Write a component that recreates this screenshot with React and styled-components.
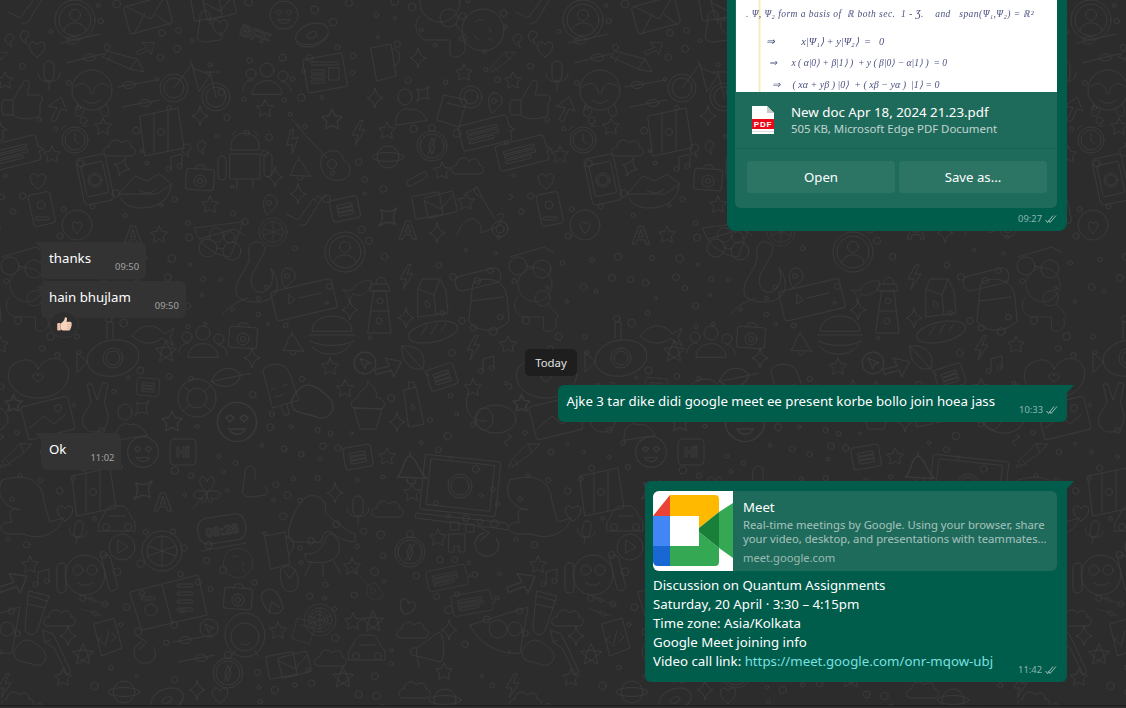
import React from 'react'
import styled, { createGlobalStyle } from 'styled-components'

const FONT = `"Noto Sans", "Open Sans", "Liberation Sans", sans-serif`

const Global = createGlobalStyle`
  html, body { margin: 0; padding: 0; background: #2c2c2c; }
  body { font-family: ${FONT}; color: #fff; }
`

const Page = styled.div`
  position: relative;
  width: 1126px;
  height: 708px;
  overflow: hidden;
  background: #2c2c2c;
  display: flex;
  flex-direction: column;
`

const Wallpaper = styled.svg`
  position: absolute;
  inset: 0;
  width: 100%;
  height: 100%;
`

const Chat = styled.div`
  position: relative;
  flex: 1;
  min-height: 0;
  overflow: hidden;
  display: flex;
  flex-direction: column;
  justify-content: flex-end;
  padding: 0 59px 23px 41px;
`

const Strip = styled.div`
  position: relative;
  height: 2px;
  background: #2c2c2c;
  border-top: 1px solid #1f1f1f;
`

const Row = styled.div`
  display: flex;
  flex-shrink: 0;
  justify-content: ${p => (p.$out ? 'flex-end' : 'flex-start')};
  margin-top: ${p => p.$top || 0}px;
`

const Bubble = styled.div`
  position: relative;
  border-radius: ${p => (p.$tail ? (p.$out ? '6px 0 6px 6px' : '0 6px 6px 6px') : '6px')};
  background: ${p => (p.$out ? '#005c4b' : '#333333')};
  color: #fff;
  font-size: 13.25px;
  line-height: 19px;
  ${p => p.$tail && `
    &::before {
      content: '';
      position: absolute;
      top: 0;
      ${p.$out ? 'right: -7px;' : 'left: -6px;'}
      width: 7px;
      height: 8px;
      background: ${p.$out ? '#005c4b' : '#333333'};
      clip-path: ${p.$out ? 'polygon(0 0, 100% 0, 0 100%)' : 'polygon(0 0, 100% 0, 100% 100%)'};
    }
  `}
`

const TextBubble = styled(Bubble)`
  display: flex;
  gap: 24px;
  padding: 7px ${p => (p.$out ? 9 : 7)}px 11px 8px;
`

const Time = styled.span`
  display: flex;
  align-items: center;
  gap: 3px;
  align-self: flex-end;
  margin-bottom: -6px;
  font-size: 9.4px;
  line-height: 14px;
  color: rgba(255, 255, 255, 0.55);
  white-space: nowrap;
`

const Reaction = styled.div`
  position: absolute;
  left: 8px;
  top: 30px;
  width: 30px;
  height: 27px;
  border-radius: 14px;
  background: #2d2d2d;
  border: 1px solid #383838;
  box-sizing: border-box;
  display: flex;
  align-items: center;
  justify-content: center;
`

const DayPill = styled.div`
  align-self: center;
  flex-shrink: 0;
  margin: 31px 6px 0 0;
  width: 52px;
  height: 27px;
  border-radius: 5px;
  background: #1e1e1e;
  color: #e2e2e2;
  font-size: 11.4px;
  line-height: 27px;
  text-align: center;
`

const DocBubble = styled(Bubble)`
  width: 340px;
  box-sizing: border-box;
  padding: 0 10px 0 8px;
  border-radius: 0 0 8px 8px;
`

const DocCard = styled.div`
  border-radius: 0 0 6px 6px;
  background: #1f6b5b;
  overflow: hidden;
`

const Scan = styled.div`
  height: 150px;
  margin-left: 1px;
  background: linear-gradient(90deg, #fff 22px, #f5eebc 23px, #f3ebc0 24px, #fff 25px);
  display: flex;
  flex-direction: column;
  justify-content: flex-end;
  overflow: hidden;
`

const Bracket = styled.div`
  flex-shrink: 0;
  width: 20px;
  height: 5px;
  margin: 0 0 ${p => p.$gap}px ${p => p.$left}px;
  border: solid #4a5180;
  border-width: 0 1px 1px;
  border-radius: 0 0 7px 7px;
  filter: blur(0.5px);
`

const Scrawl = styled.div`
  height: 14px;
  margin-bottom: ${p => p.$gap || 0}px;
  padding-left: ${p => p.$left}px;
  font-family: "Liberation Serif", serif;
  font-style: italic;
  font-size: ${p => p.$size || 10}px;
  letter-spacing: ${p => p.$track || 0}px;
  line-height: 14px;
  color: #4a5180;
  white-space: pre;
  filter: blur(0.6px);
`

const DocInfo = styled.div`
  display: flex;
  align-items: center;
  gap: 17px;
  height: 56px;
  padding-left: 17px;
  border-bottom: 1px solid #1a6050;
`

const DocName = styled.div`
  font-size: 13.3px;
  line-height: 18px;
`

const DocMeta = styled.div`
  font-size: 11.4px;
  line-height: 16px;
  color: rgba(255, 255, 255, 0.72);
`

const DocActions = styled.div`
  display: flex;
  gap: 4px;
  padding: 12px 10px 15px 12px;
`

const DocButton = styled.div`
  flex: 1;
  height: 32px;
  border-radius: 4px;
  background: #2c7565;
  font-size: 13.2px;
  line-height: 32px;
  text-align: center;
`

const DocFooter = styled.div`
  display: flex;
  justify-content: flex-end;
  height: 23px;
  & > span {
    align-self: flex-start;
    margin: 4px 0 0;
  }
`

const MeetBubble = styled(Bubble)`
  width: 422px;
  box-sizing: border-box;
  padding: 10px 10px 11px 8px;
`

const LinkCard = styled.div`
  display: flex;
  height: 80px;
  margin-bottom: 5px;
  border-radius: 6px;
  overflow: hidden;
  background: #1f6b5b;
`

const LinkThumb = styled.svg`
  width: 80px;
  height: 80px;
  flex-shrink: 0;
`

const LinkBody = styled.div`
  padding: 6px 0 0 10px;
`

const LinkTitle = styled.div`
  font-size: 13.2px;
  line-height: 20px;
  margin-bottom: 1px;
`

const LinkDesc = styled.div`
  font-size: 11.25px;
  line-height: 14px;
  color: rgba(255, 255, 255, 0.6);
  white-space: pre;
`

const LinkHost = styled.div`
  margin-top: 3px;
  font-size: 11.2px;
  line-height: 18px;
  color: rgba(255, 255, 255, 0.55);
`

const LastLine = styled.div`
  display: flex;
  justify-content: space-between;
`

const Link = styled.span`
  color: #7be0e0;
`

const Ticks = () => (
  <svg width="12" height="8" viewBox="0 0 12 8" fill="none" stroke="rgba(255,255,255,.6)" strokeWidth="1">
    <path d="M0.5 5L2.5 7.5L8 0.5M5 7.5L11 0.5M3.6 5.5L5 7.5" />
  </svg>
)

const Thumb = () => (
  <svg width="17" height="17" viewBox="0 0 17 17">
    <path d="M5 7.5L8 4.5C8.6 3.5 8.6 2 9.2 1.3C10.2 0.8 11.2 1.8 11 3.2L10.6 6H14.6C16 6.2 16 8 15.3 8.5C16 9.2 15.8 10.4 15 10.7C15.4 11.6 15 12.6 14.2 12.8C14.4 13.8 13.7 14.6 12.6 14.6H8C6.5 14.6 5.6 14 5 13.6Z" fill="#f6d4bd" />
    <path d="M10.6 6H14.6M11 8.6H15.2M11 10.8H15M10.8 12.9H14.2" stroke="#dca98a" strokeWidth=".7" fill="none" />
    <rect x="1.2" y="7" width="3.6" height="7.4" rx="1" fill="#efc2a6" />
  </svg>
)

const PdfIcon = () => (
  <svg width="22" height="28" viewBox="0 0 22 28" style={{ flexShrink: 0 }}>
    <path d="M0 0H15L22 7V28H0Z" fill="#fff" />
    <path d="M15 0L22 7H15Z" fill="#c9c9c9" />
    <rect y="13" width="22" height="10" fill="#e8091a" />
    <text x="11" y="21" textAnchor="middle" fontSize="8" fontWeight="700" letterSpacing=".8" fill="#fff" fontFamily="Liberation Sans, sans-serif">PDF</text>
    <path d="M0 25.5H22" stroke="#ddd" />
  </svg>
)

const MeetLogo = () => (
  <LinkThumb viewBox="0 0 80 80">
    <rect width="80" height="80" fill="#fff" />
    <path d="M0 25L17 4V25Z" fill="#ea4335" />
    <path d="M17 4H62Q66 4 66 8V21L46 37V25H17Z" fill="#ffba00" />
    <path d="M0 25H17V55H0Z" fill="#4285f4" />
    <path d="M0 55H17V75H5Q0 75 0 70Z" fill="#1967d2" />
    <path d="M17 55H46V41L66 57V71Q66 75 62 75H17Z" fill="#34a853" />
    <path d="M46 37L66 21V57L46 41Z" fill="#188038" />
    <path d="M66 21L80 12V67L66 57Z" fill="#34a853" />
  </LinkThumb>
)

// wallpaper doodles, each drawn round 0,0
const starPath = (r = 9) => {
  let d = ''
  for (let i = 0; i < 10; i++) {
    const a = -Math.PI / 2 + (i * Math.PI) / 5
    const q = i % 2 ? r * 0.5 : r
    d += `${i ? 'L' : 'M'}${(Math.cos(a) * q).toFixed(1)} ${(Math.sin(a) * q).toFixed(1)}`
  }
  return d + 'Z'
}

const Lines = ({ x, y, w, n = 2, gap = 5 }) =>
  Array.from({ length: n }, (_, i) => <rect key={i} x={x} y={y + i * gap} width={w} height={3} rx={1.5} />)

const Label = ({ children, size = 14, y = 5 }) => (
  <text textAnchor="middle" y={y} fontSize={size} fontWeight="700" fontFamily="Liberation Sans, sans-serif">{children}</text>
)

const shapes = {
  star: <path d={starPath()} />,
  sparkle: <path d="M0-10Q1-2 8 0Q1 2 0 10Q-1 2-8 0Q-1-2 0-10Z" />,
  heart: <path d="M0 8C-10 2-9-7-4-7C-2-7 0-5 0-4C0-5 2-7 4-7C9-7 10 2 0 8Z" />,
  cloud: <path d="M-14 8C-20 8-20-1-13-1C-13-9-4-10-1-5C3-9 10-7 9-1C15-1 15 8 9 8Z" />,
  bolt: <path d="M2-12L-6 2H0L-3 12L7-3H1L5-12Z" />,
  quote: <><path d="M-10 4C-14 2-14-6-8-6C-3-6-3 1-8 2L-6 7Z" /><path d="M5 1C1-1 1-9 7-9C12-9 12-2 7-1L9 4Z" /></>,
  music: <><path d="M-5 6V-6L6-9V3" /><circle cx="-7.500" cy="6" r="2.500" /><circle cx="3.500" cy="3" r="2.500" /></>,
  bubble: <><path d="M-25-10Q-25-13-22-13H22Q25-13 25-10V-1L30 4L25 4V10Q25 13 22 13H-22Q-25 13-25 10Z" /><Lines x={-18} y={-6} w={32} /><Lines x={-18} y={4} w={26} n={1} /></>,
  note: <><rect x="-14" y="-11" width="28" height="22" rx="3" /><Lines x={-8} y={-5} w={16} n={3} gap={4} /></>,
  mic: <><rect x="-5" y="-14" width="10" height="20" rx="5" /><path d="M-11-2C-11 10 11 10 11-2M0 7V15" /></>,
  avatar: <><circle r="20" /><circle r="16" /><circle cy="-5" r="5.500" /><path d="M-11 11C-10 0 10 0 11 11" /></>,
  thumb: <path d="M-18 0H-9L1-17C3-22 8-20 7-14L5-5H17C21-5 21 2 18 3V15C10 20-3 20-9 15H-18C-21 15-21 0-18 0ZM-9 0V15" />,
  arrow: <path d="M-9-2L3-11L9 3L3 1L-3 14L-7 12L-1 0Z" />,
  facehide: <><circle r="20" /><path d="M-18-3C-8-10-3-6-1 4M18-3C8-10 3-6 1 4M-8 10Q0 17 8 10M-14 13C-22 30-8 30-8 18M14 13C22 30 8 30 8 18" /></>,
  pencil: <path d="M-20-6L-16-12L14-4L21 9L7 6L-20-6ZM-16-1L-12-8M14-4L7 6" />,
  bike: <><circle cx="-21" cy="8" r="14" /><circle cx="-21" cy="8" r="10" /><circle cx="21" cy="17" r="14" /><circle cx="21" cy="17" r="10" /><path d="M-21 8L-3-16M-5-20L-2-12L15-5L4 12L-3-16M21 17L15-8H10M15-8H24" /></>,
  sliders: <><path d="M-20-8L20-15M-15 12L22 5" /><ellipse cx="-8" cy="-10" rx="6" ry="3.500" /><ellipse cx="8" cy="8" rx="6" ry="3.500" /></>,
  map: <><path d="M-20-14L18-22L24 18L-15 26ZM-6-17V22M8-19V20" /><circle cx="1" cy="2" r="3.500" /></>,
  timer: <><circle r="13" /><circle r="10" /><path d="M0-6V1L4 4M-14-10L-10-14M8-14H13" /></>,
  phonewa: <><rect x="-15" y="-24" width="30" height="47" rx="4" transform="rotate(-12)" /><rect x="-11" y="-17" width="22" height="32" rx="2" transform="rotate(-12)" /><circle r="7" /><circle r="5" /></>,
  lips: <path d="M-28 4L-12-14L0-9L12-16L25-6L10 4H-12ZM-26 8C-20 24 22 22 24-4M-8 0C-3 4 4 4 9-1" />,
  camera: <><rect x="-14" y="-10" width="28" height="21" rx="3" transform="rotate(4)" /><circle cy="2" r="6" /><circle cy="2" r="2.500" /><path d="M-5-10L-3-14H4L6-10" /></>,
  android: <><path d="M-14-20A14 12 0 0 1 14-20V-15H-14ZM-9-34L-13-30M9-34L13-30M-15-11H15V14H-15ZM-8 14V24M8 14V24" /><rect x="-27" y="-9" width="8" height="24" rx="4" /><rect x="19" y="-12" width="8" height="24" rx="4" /></>,
  guitar: <><path d="M-31-25L0 8M-35-30L-26-22M-5 6C6-4 16 2 16 10C26 14 26 30 12 30C0 32-10 20-5 6Z" /><circle cx="5" cy="14" r="4.500" /></>,
  bell: <path d="M-9 5C-4 0-5-9 0-10C5-9 6 2 12 6ZM0-10V-13M-2 7C-2 11 4 11 4 7" />,
  people: <><circle cx="0" cy="-12" r="7" /><circle cx="-16" cy="-8" r="5" /><circle cx="16" cy="-6" r="5" /><path d="M-15 12C-14-6 14-6 15 12ZM-24 8C-24 0-18-2-14-2M24 10C24 2 18 0 15 0" /></>,
  news: <><rect x="-20" y="-17" width="40" height="34" rx="2" transform="rotate(-10)" /><Lines x={-14} y={-11} w={28} n={1} /><Lines x={-14} y={-3} w={14} n={3} gap={5} /><rect x="4" y="-5" width="10" height="12" /></>,
  donut: <><ellipse rx="17" ry="11" transform="rotate(-22)" /><ellipse rx="5" ry="3" transform="rotate(-22)" /><path d="M-15 6C-6 14 10 8 15 1" /></>,
  hearteyes: <><circle r="14" /><path d="M-8-3L-5-5L-2-3L-5 0ZM2-3L5-5L8-3L5 0ZM-6 5C-2 10 3 10 6 5Z" /></>,
  envelope: <><rect x="-22" y="-14" width="44" height="28" rx="3" transform="rotate(-15)" /><path d="M-21-8L3 4L18-21M-14 19L-3-2M22 10L8 0" /></>,
  mail2: <><rect x="-20" y="-10" width="28" height="23" rx="2" transform="rotate(-10)" /><rect x="-8" y="-7" width="30" height="21" rx="2" transform="rotate(-14)" /><path d="M-8-2L8 6L20-8" /></>,
  compass: <><circle r="15" /><circle r="12" /><circle cy="-18" r="3.500" /><path d="M4-8L-4 8M-3 0L0-8L3 0L0 8Z" /></>,
  planet: <><circle r="11" /><ellipse rx="16" ry="4.500" /></>,
  drink: <><path d="M-13-12L10-7L2 20L-20 13ZM-10-4L7 0" /><circle cx="14" cy="-10" r="11" /><circle cx="14" cy="-10" r="7" /></>,
  person: <><ellipse cx="-5" cy="-10" rx="7" ry="8" /><path d="M-14 18C-15 2-4 0 0 3C5 0 14 6 17 13Z" /></>,
  scooter: <><path d="M-20-20L-10-26L-4-14L8 6M-6-16C-14-18-14-26-10-26M-30 22C-22-2-4 4-6 20L10 14C18 2 20-2 10 2" /><circle cx="13" cy="16" r="8" /><circle cx="13" cy="16" r="4" /></>,
  astro: <><circle cy="-18" r="20" /><path d="M-20-4C-30 6-20 20-14 20H10V34C14 42 30 34 24 22C34 18 16 10 16 4" /><circle cx="9" cy="-2" r="9" /></>,
  cookie: <><circle r="21" /><path d="M-8-8Q-4-12 0-10M6-2L8 2M-10 4L-4 10M6 8L9 12" /></>,
  mug: <path d="M-12-14L8-18L13 14L-6 19ZM9-13C20-14 18 2 11 4" />,
  laptop: <><rect x="-38" y="-30" width="76" height="55" rx="3" transform="rotate(6)" /><rect x="-32" y="-26" width="64" height="46" transform="rotate(6)" /><path d="M-44 25L46 35L50 42L-44 30Z" /><circle cx="0" cy="-2" r="12" /><circle cx="0" cy="-2" r="9" /></>,
  controller: <path d="M-18 22C-30 22-24 0-12-18C-4-30 16-24 12-8C30 10 42 14 42 14V22C20 22 14-2 8 22Z" />,
  dino: <path d="M-28-30C-8-36 12-34 14-8L20 12L33 8C28 26 6 30-6 24H-22C-34 20-30 12-18 12C-22 4-20-4-10 0C-24-2-36-14-28-30Z" />,
  car: <><path d="M-18 4C-12-2-12-12-4-12H5C11-12 12-2 18 4V13H-18ZM-7-2H8" /><circle cx="-11" cy="9" r="3.500" /><circle cx="11" cy="9" r="3.500" /></>,
  clover: <path d="M0 2C-14-8-4-20 0-8C4-20 14-8 0 2ZM0 2C-18-4-16 12-4 8C-8 14 0 16 0 2ZM0 2C18-4 16 12 4 8C8 14 0 16 0 2ZM0 2L-14 18" />,
  clock: <><rect x="-24" y="-14" width="48" height="26" rx="10" transform="rotate(-9)" /><path d="M-20 21L24 13" /><g transform="rotate(-9)"><Label size={13}>09:28</Label></g></>,
  orange: <><circle r="20" /><circle r="15" /><path d="M0-15V15M-14-5L14 5M-14 5L14-5" /></>,
  play: <><circle r="13" /><path d="M-4-7L6 0L-4 6Z" /></>,
  monkey: <><circle r="20" /><circle cx="-7" cy="-5" r="5" /><circle cx="7" cy="-5" r="5" /><path d="M-7 8Q0 13 7 8" /><rect x="-28" y="-12" width="9" height="30" rx="4" /><rect x="20" y="-14" width="9" height="36" rx="4" transform="rotate(-14)" /></>,
  book: <><path d="M-35-8L33-25L42 15L-23 30ZM-3-15L7 23" /><Lines x={-24} y={-3} w={14} n={1} /><Lines x={12} y={-16} w={16} n={4} gap={8} /><circle cx="-14" cy="10" r="6" /></>,
  flop: <path d="M-9-14C0-22 10-12 8 2C6 12-6 10-8 2C-10-4-10-8-9-14ZM-6-12L0-4L6-14" />,
  tube: <path d="M-6-22L14-17L2 18C-2 24-10 22-10 15ZM-5-17L12-12M-7-9L10-5" />,
  code: <path d="M-12-14L8-20L16 10L-4 18ZM-4-2L-8 2L-3 5M6-5L10-1L6 3M3-7L-1 8" />,
  refresh: <><path d="M-3-11C-16-7-12 12 2 10C12 8 12-2 8-6" /><path d="M-8-17L2-11L-6-4" /></>,
  cursor: <><circle r="9" /><path d="M-4-4L5 0L1 1L0 5Z" /></>,
  woman: <><ellipse rx="20" ry="22" /><circle cy="2" r="14" /><path d="M-4 8Q0 12 5 8M-14 22L-10 16M14 22L10 16" /></>,
  brush: <path d="M-14-20L-4-16L2-4L14 22L10 24L-3-2L-12-8ZM-12-8L-7-10" />,
  blob: <path d="M-12-10C-4-18 6-8 12-2C18 8 8 14 2 12C-6 8-18 10-18 0C-18-4-14-8-12-10Z" />,
  gear: <><circle r="5" /><path d={starPath(11)} /></>,
  pizza: <><path d="M-30-10L28-28L20 18C4 20-20 12-30-10Z" /><circle cx="-2" cy="-6" r="9" /><circle cx="15" cy="-6" r="7" /></>,
  mega: <path d="M-6-2L16-18C22-14 22 8 18 12L-6 6ZM-6-2C-14-4-16 6-6 6M-6 6L-4 16" />,
  burger: <path d="M-20-4C-20-24 20-24 20-4ZM-22 0H22M-22 6C-10 12 10 12 22 6M-20 12C-10 22 10 22 18 10" />,
  bread: <><ellipse rx="25" ry="10" transform="rotate(-12)" /><path d="M-12 3L-6-6M-2 2L4-8M8-1L13-8" /></>,
  lighthouse: <><path d="M-6-14H6L11 28H-12ZM-10-14H10L8-21H-8ZM-4-21C-4-30 6-30 6-21M-9 6H9" /><circle cx="0" cy="-4" r="3" /><circle cx="-1" cy="16" r="3" /></>,
  milk: <><path d="M-12-8L-8-18H10L16-6L18 16L-12 20ZM10-18L4-2L6 18M-12-8L4-2" /><path d="M-4 4C-7 10-1 13 0 8C0 6-2 6-4 4Z" /></>,
  pack: <><path d="M-12-20C0-28 20-24 22-6L24 18C14 30-10 30-16 18ZM-14-2L18-6" /><rect x="-24" y="-32" width="46" height="15" rx="6" transform="rotate(-14)" /></>,
  cream: <path d="M-14 4L-8 24H8L14 4ZM-16 2C-20-6-10-6-10-8C-10-16 0-14 0-24C6-16 10-14 8-8C18-6 18 2 14 4Z" />,
  bottle: <><path d="M-8-10L4-13L12 24L-3 27ZM-3-11L-4-18L2-18L3-12" /><path d="M0 4C-3 10 3 12 3 8Z" /></>,
  dog: <><path d="M-22-20C-28 0-16 10-4 8" /><ellipse cx="6" cy="6" rx="20" ry="14" /><ellipse cx="-6" cy="6" rx="9" ry="11" /></>,
  pop: <><path d="M-14-18C-10-26 8-26 12-16L22 12L-4 20ZM4 18L8 28L12 26L10 16" /><path d="M-6 2L-2 0M6-2L10-4M-2 8Q2 10 6 6" /></>,
  octopus: <path d="M-20 28C-26 12-6 2-8-14C-10-28 4-30 8-20C6-6-14 10-2 22C8 30 20 16 14 0C22 10 24 26 10 32C0 36-14 34-20 28ZM-10 30C-20 34-28 38-34 46" />,
  shades: <><circle cx="-12" cy="3" r="9" /><circle cx="12" cy="6" r="9" /><path d="M-3 3L3 4M-20-6L14-16L24-10" /></>,
  voice: <><rect x="-30" y="-15" width="62" height="30" rx="3" transform="rotate(-13)" /><path d="M-4-2L18-7M-14-6L-8 0L-14 4Z" /></>,
  leaf: <path d="M-11-12C6-14 14-2 10 10C0 14-12 6-11-12ZM-11-12L16 18" />,
  sub: <><ellipse cx="0" cy="0" rx="26" ry="18" transform="rotate(-10)" /><circle r="10" /><circle r="7" /><path d="M-6-20V-36H0V-20M-26 4L-36-6V14Z" /></>,
  fish: <path d="M-18 4C-8-10 8-8 14 2L24-4L20 6L24 14L12 6C4 14-10 12-18 4Z" />,
  hands: <path d="M0 26C-24 26-34 8-28-4C-18-16-2-14 0-2C6-16 24-18 30-4C34 10 22 26 0 26ZM-5 4C-3 0 0 2 0 4C0 2 3 0 5 4C5 7 0 10 0 10C0 10-5 7-5 4Z" />,
  peace: <path d="M-12 8L-4-6L-8-24L-3-24L2-8L8-26L13-24L9-4C16 6 14 24 0 24C-10 24-14 16-12 8Z" />,
  photo: <><rect x="-24" y="-17" width="48" height="34" rx="3" transform="rotate(-14)" /><path d="M-18 10L-4-2L6 6L18-4" /><circle cx="10" cy="-10" r="3.500" /></>,
  buoy: <><circle r="19" /><circle r="10" /><path d="M-14-12L-7-7M14-12L7-7M-14 13L-7 7M14 13L7 7" /></>,
  pin: <><path d="M-1-10C6-10 9-3 6 2L-3 10C-8 3-8-10-1-10Z" /><circle cx="-1" cy="-2" r="2.500" /></>,
  chair: <path d="M-18-4C-8-4-2-6 4-22C10-28 18-18 16-6C12 4 0 6-12 4C-18 4-18-2-18-4ZM-12 4L-18 18M0 6L0 18M10 2L18 16" />,
  pixel: <><rect x="-6" y="-16" width="8" height="8" /><rect x="9" y="-14" width="8" height="8" /><path d="M-8-4H8V14H2V8H-3V14H-8Z" /></>,
  check: <path d="M-22 2L-10 8L6-14L8-10M-8 14L-2 12L14-14L8-16M14-14L18-16" />,
  clip: <rect x="-11" y="-3" width="22" height="6" rx="3" transform="rotate(-30)" />,
  hand: <path d="M-8-10L-10 6C-12 10-10 14-2 14L12 12C16 10 14 4 12 4M-8-10C-10-18 2-20 2-12L2-4" />,
  badge: <><rect x="-11" y="-17" width="22" height="32" rx="3" transform="rotate(-12)" /><circle cx="-1" cy="-5" r="4" /><rect x="-7" y="7" width="14" height="3" rx="1.500" /></>,
  personheart: <><circle r="15" /><path d="M0 8C-6 4-6-3-2-3C-1-3 0-2 0-1C0-2 1-3 2-3C6-3 6 4 0 8Z" /></>,
  bff: <g transform="rotate(20)"><Label size={16}>BFF</Label></g>,
  letterA: <Label size={26} y={9}>A</Label>,
  hi: <><rect x="-13" y="-13" width="26" height="26" rx="4" /><Label size={14}>Hi</Label></>,
}

const placed = [
  ['avatar', 75, 20], ['check', 30, 10], ['envelope', 148, 15], ['quote', 18, 40], ['heart', 37, 49], ['sliders', 81, 50, -3], ['mic', 49, 75],
  ['thumb', 22, 100], ['arrow', 58, 108], ['facehide', 92, 90], ['pencil', 123, 63], ['bike', 195, 80], ['sliders', 137, 95], ['map', 160, 130],
  ['timer', 75, 140], ['star', 103, 127], ['star', 52, 155], ['cloud', 122, 148], ['bubble', 14, 153, -14], ['phonewa', 95, 180], ['lips', 147, 190],
  ['camera', 200, 179], ['android', 245, 165], ['guitar', 327, 150], ['bell', 299, 170], ['people', 267, 82], ['news', 325, 73], ['donut', 312, 35],
  ['hearteyes', 284, 15], ['bff', 255, 35], ['mail2', 212, 5], ['heart', 220, 27], ['hand', 208, 28], ['quote', 195, 150], ['music', 176, 163], ['sparkle', 122, 167, 20],
  ['heart', 38, 181], ['badge', 42, 210], ['personheart', 77, 225], ['arrow', 147, 48, 40, .8], ['sparkle', 200, 116], ['star', 265, 109],
  ['star', 332, 120, 0, 1.2], ['bolt', 292, 142, -15], ['bolt', 358, 133], ['sparkle', 275, 177], ['sparkle', 298, 194], ['star', 210, 205], ['pin', 270, 205], ['check', 308, 212],
  ['note', 345, 209, -12], ['pizza', 217, 240, 10, .8], ['orange', 273, 232, 0, .7], ['letterA', 133, 235], ['star', 159, 235],
  ['astro', 440, 20], ['cookie', 483, 30], ['mug', 383, 62], ['sparkle', 418, 58], ['star', 464, 73], ['pencil', 503, 62, -60, .7], ['star', 5, 81], ['sparkle', 375, 98],
  ['person', 410, 107], ['sparkle', 423, 94, 40], ['drink', 457, 107], ['pin', 495, 103], ['star', 387, 131], ['compass', 432, 146], ['bubble', 485, 133, -14],
  ['planet', 388, 157], ['cloud', 470, 166], ['star', 442, 171], ['clip', 417, 179], ['mail2', 433, 203], ['scooter', 487, 213], ['star', 466, 202], ['sparkle', 388, 217, 45, 1.3], ['letterA', 408, 230], ['sparkle', 437, 233],
  ['shades', 220, 245], ['octopus', 257, 268], ['avatar', 345, 252], ['pin', 288, 278], ['voice', 303, 300], ['sparkle', 350, 310], ['lighthouse', 380, 305], ['fish', 362, 290, 150, .7],
  ['milk', 430, 297], ['bolt', 406, 277], ['pack', 485, 303], ['shades', 22, 263], ['burger', 332, 335], ['bread', 433, 332], ['sparkle', 406, 318], ['camera', 243, 337], ['bell', 292, 345],
  ['people', 203, 345], ['sparkle', 252, 358], ['star', 330, 367], ['cursor', 365, 363, 0, 1.2], ['arrow', 390, 367, 50, 1.1], ['leaf', 413, 358], ['note', 442, 377, -18], ['bolt', 473, 348], ['star', 0, 345],
  ['music', 488, 365], ['star', 473, 388], ['pop', 277, 388], ['blob', 315, 402, 0, 1.3], ['star', 345, 389], ['cream', 368, 405], ['bottle', 412, 400], ['dog', 490, 413], ['leaf', 227, 378, -60], ['buoy', 197, 398],
  ['sparkle', 397, 422], ['hearteyes', 237, 422, 0, 1.4], ['star', 522, 404],
  ['astro', 27, 300, 0, .85], ['fish', 150, 332], ['sub', 113, 358], ['gear', 166, 352], ['hands', 38, 372], ['note', 148, 387, 5, .8], ['photo', 48, 418], ['peace', 95, 408], ['person', 130, 422],
  ['sparkle', 142, 408, 45], ['star', 172, 422, 0, 1.2], ['pencil', 17, 455, -60, .8], ['hearteyes', 143, 452, 0, 1.1], ['hi', 183, 452], ['star', 13, 404],
  ['note', 358, 457, -10], ['star', 387, 457], ['bell', 410, 470, 0, 1.4], ['laptop', 460, 488], ['controller', 313, 520], ['mic', 358, 510], ['sparkle', 335, 493], ['cloud', 390, 509],
  ['star', 412, 493], ['compass', 410, 552], ['star', 438, 538], ['pixel', 457, 538], ['refresh', 487, 545, 0, 1.1], ['chair', 323, 558], ['star', 352, 567], ['guitar', 370, 583, 0, .55], ['bubble', 447, 578, -12, .8], ['bubble', 472, 603, -10, .8],
  ['arrow', 15, 583, 45, 1.2], ['orange', 320, 620, 0, .8], ['star', 353, 622], ['gear', 373, 622], ['heart', 407, 607, 20], ['pizza', 500, 635],
  ['dino', 30, 510], ['map', 92, 490], ['car', 117, 518], ['letterA', 163, 502], ['clover', 207, 490], ['sparkle', 143, 490, 45, 1.3], ['hand', 253, 483], ['clock', 222, 530], ['mug', 277, 550], ['orange', 162, 551], ['play', 122, 547],
  ['monkey', 85, 575], ['cookie', 238, 563, 0, .7], ['heart', 65, 513], ['mic', 78, 532, 10, .8], ['book', 165, 600], ['camera', 238, 598], ['flop', 290, 583], ['flop', 270, 598, 160], ['tube', 35, 613], ['cloud', 62, 618], ['sliders', 93, 607, 30, .6],
  ['code', 106, 638], ['refresh', 145, 653], ['cursor', 209, 628], ['woman', 245, 635], ['mail2', 287, 663], ['star', 278, 631], ['drink', 308, 628, 0, .8], ['brush', 57, 650], ['blob', 32, 653], ['gear', 83, 655], ['sparkle', 68, 636], ['sliders', 193, 650],
  ['compass', 228, 673], ['sparkle', 197, 690], ['star', 63, 678], ['planet', 124, 692], ['donut', 167, 700], ['heart', 220, 695], ['cloud', 20, 700], ['star', 30, 565], ['music', 43, 578],
  ['mega', 423, 650], ['car', 367, 647], ['cloud', 415, 630], ['cloud', 333, 658], ['gear', 343, 678], ['star', 444, 672], ['cloud', 417, 690], ['planet', 445, 700], ['sparkle', 449, 630], ['bolt', 4, 686],
]

// the little circles scattered between the doodles
const dots = []
let seed = 7
const rnd = () => (seed = (seed * 16807) % 2147483647) / 2147483647
for (let i = 0; i < 1500 && dots.length < 300; i++) {
  const x = rnd() * 508
  const y = rnd() * 708
  const r = 1.5 + rnd() * 2.4
  const clear = placed.every(d => Math.hypot(d[1] - x, d[2] - y) > 20 * (d[4] || 1)) && dots.every(d => Math.hypot(d.x - x, d.y - y) > 13)
  if (clear) dots.push({ x, y, r })
}

const Doodle = ({ item }) => {
  const [name, x, y, rot = 0, scale = 1] = item
  const at = [x]
  if (x < 45) at.push(x + 508)
  if (x > 463) at.push(x - 508)
  return at.map(px => (
    <g key={px} transform={`translate(${px} ${y}) rotate(${rot}) scale(${scale})`}>{shapes[name]}</g>
  ))
}

const Doodles = () => (
  <Wallpaper>
    <defs>
      <pattern id="wall" width="508" height="708" patternUnits="userSpaceOnUse">
        <g fill="none" stroke="#393939" strokeWidth="1" strokeLinejoin="round" strokeLinecap="round">
          {placed.map((item, i) => <Doodle key={i} item={item} />)}
          {dots.map((d, i) => <circle key={i} cx={d.x} cy={d.y} r={d.r} />)}
        </g>
      </pattern>
    </defs>
    <rect width="1126" height="708" fill="url(#wall)" />
  </Wallpaper>
)

const Stamp = ({ at }) => (
  <Time>{at}<Ticks /></Time>
)

export default function App() {
  return (
    <Page>
      <Global />
      <Doodles />
      <Chat>
        <Row $out>
          <DocBubble $out>
            <DocCard>
              <Scan>
                <Bracket $left={125} $gap={7} />
                <Scrawl $left={10} $gap={14} $size={9.5} $track={0.45}>{'. Ψ, Ψ₂ form a basis of  ℝ both sec.  1 - Ʒ.    and   span(Ψ₁,Ψ₂) = ℝ²'}</Scrawl>
                <Scrawl $left={30} $gap={7} $size={10.5}>{'⇒          x|Ψ₁⟩ + y|Ψ₂⟩  =   0'}</Scrawl>
                <Scrawl $left={33} $gap={8} $size={9.6}>{'⇒      x ( α|0⟩ + β|1⟩ )  + y ( β|0⟩ − α|1⟩ )  = 0'}</Scrawl>
                <Scrawl $left={36} $size={10}>{'⇒     ( xα + yβ ) |0⟩  + ( xβ − yα )  |1⟩ = 0'}</Scrawl>
              </Scan>
              <DocInfo>
                <PdfIcon />
                <div>
                  <DocName>New doc Apr 18, 2024 21.23.pdf</DocName>
                  <DocMeta>505 KB, Microsoft Edge PDF Document</DocMeta>
                </div>
              </DocInfo>
              <DocActions>
                <DocButton>Open</DocButton>
                <DocButton>Save as...</DocButton>
              </DocActions>
            </DocCard>
            <DocFooter><Stamp at="09:27" /></DocFooter>
          </DocBubble>
        </Row>

        <Row $top={11}>
          <TextBubble $tail>
            <span>thanks</span>
            <Time>09:50</Time>
          </TextBubble>
        </Row>
        <Row $top={2}>
          <TextBubble>
            <span>hain bhujlam</span>
            <Time>09:50</Time>
            <Reaction><Thumb /></Reaction>
          </TextBubble>
        </Row>

        <DayPill>Today</DayPill>

        <Row $out $top={9}>
          <TextBubble $out $tail>
            <span>Ajke 3 tar dike didi google meet ee present korbe bollo join hoea jass</span>
            <Stamp at="10:33" />
          </TextBubble>
        </Row>

        <Row $top={11}>
          <TextBubble $tail>
            <span>Ok</span>
            <Time>11:02</Time>
          </TextBubble>
        </Row>

        <Row $out $top={11}>
          <MeetBubble $out $tail>
            <LinkCard>
              <MeetLogo />
              <LinkBody>
                <LinkTitle>Meet</LinkTitle>
                <LinkDesc>{'Real-time meetings by Google. Using your browser, share\nyour video, desktop, and presentations with teammates...'}</LinkDesc>
                <LinkHost>meet.google.com</LinkHost>
              </LinkBody>
            </LinkCard>
            <div>Discussion on Quantum Assignments</div>
            <div>Saturday, 20 April · 3:30 – 4:15pm</div>
            <div>Time zone: Asia/Kolkata</div>
            <div>Google Meet joining info</div>
            <LastLine>
              <span>Video call link: <Link>https://meet.google.com/onr-mqow-ubj</Link></span>
              <Stamp at="11:42" />
            </LastLine>
          </MeetBubble>
        </Row>
      </Chat>
      <Strip />
    </Page>
  )
}
